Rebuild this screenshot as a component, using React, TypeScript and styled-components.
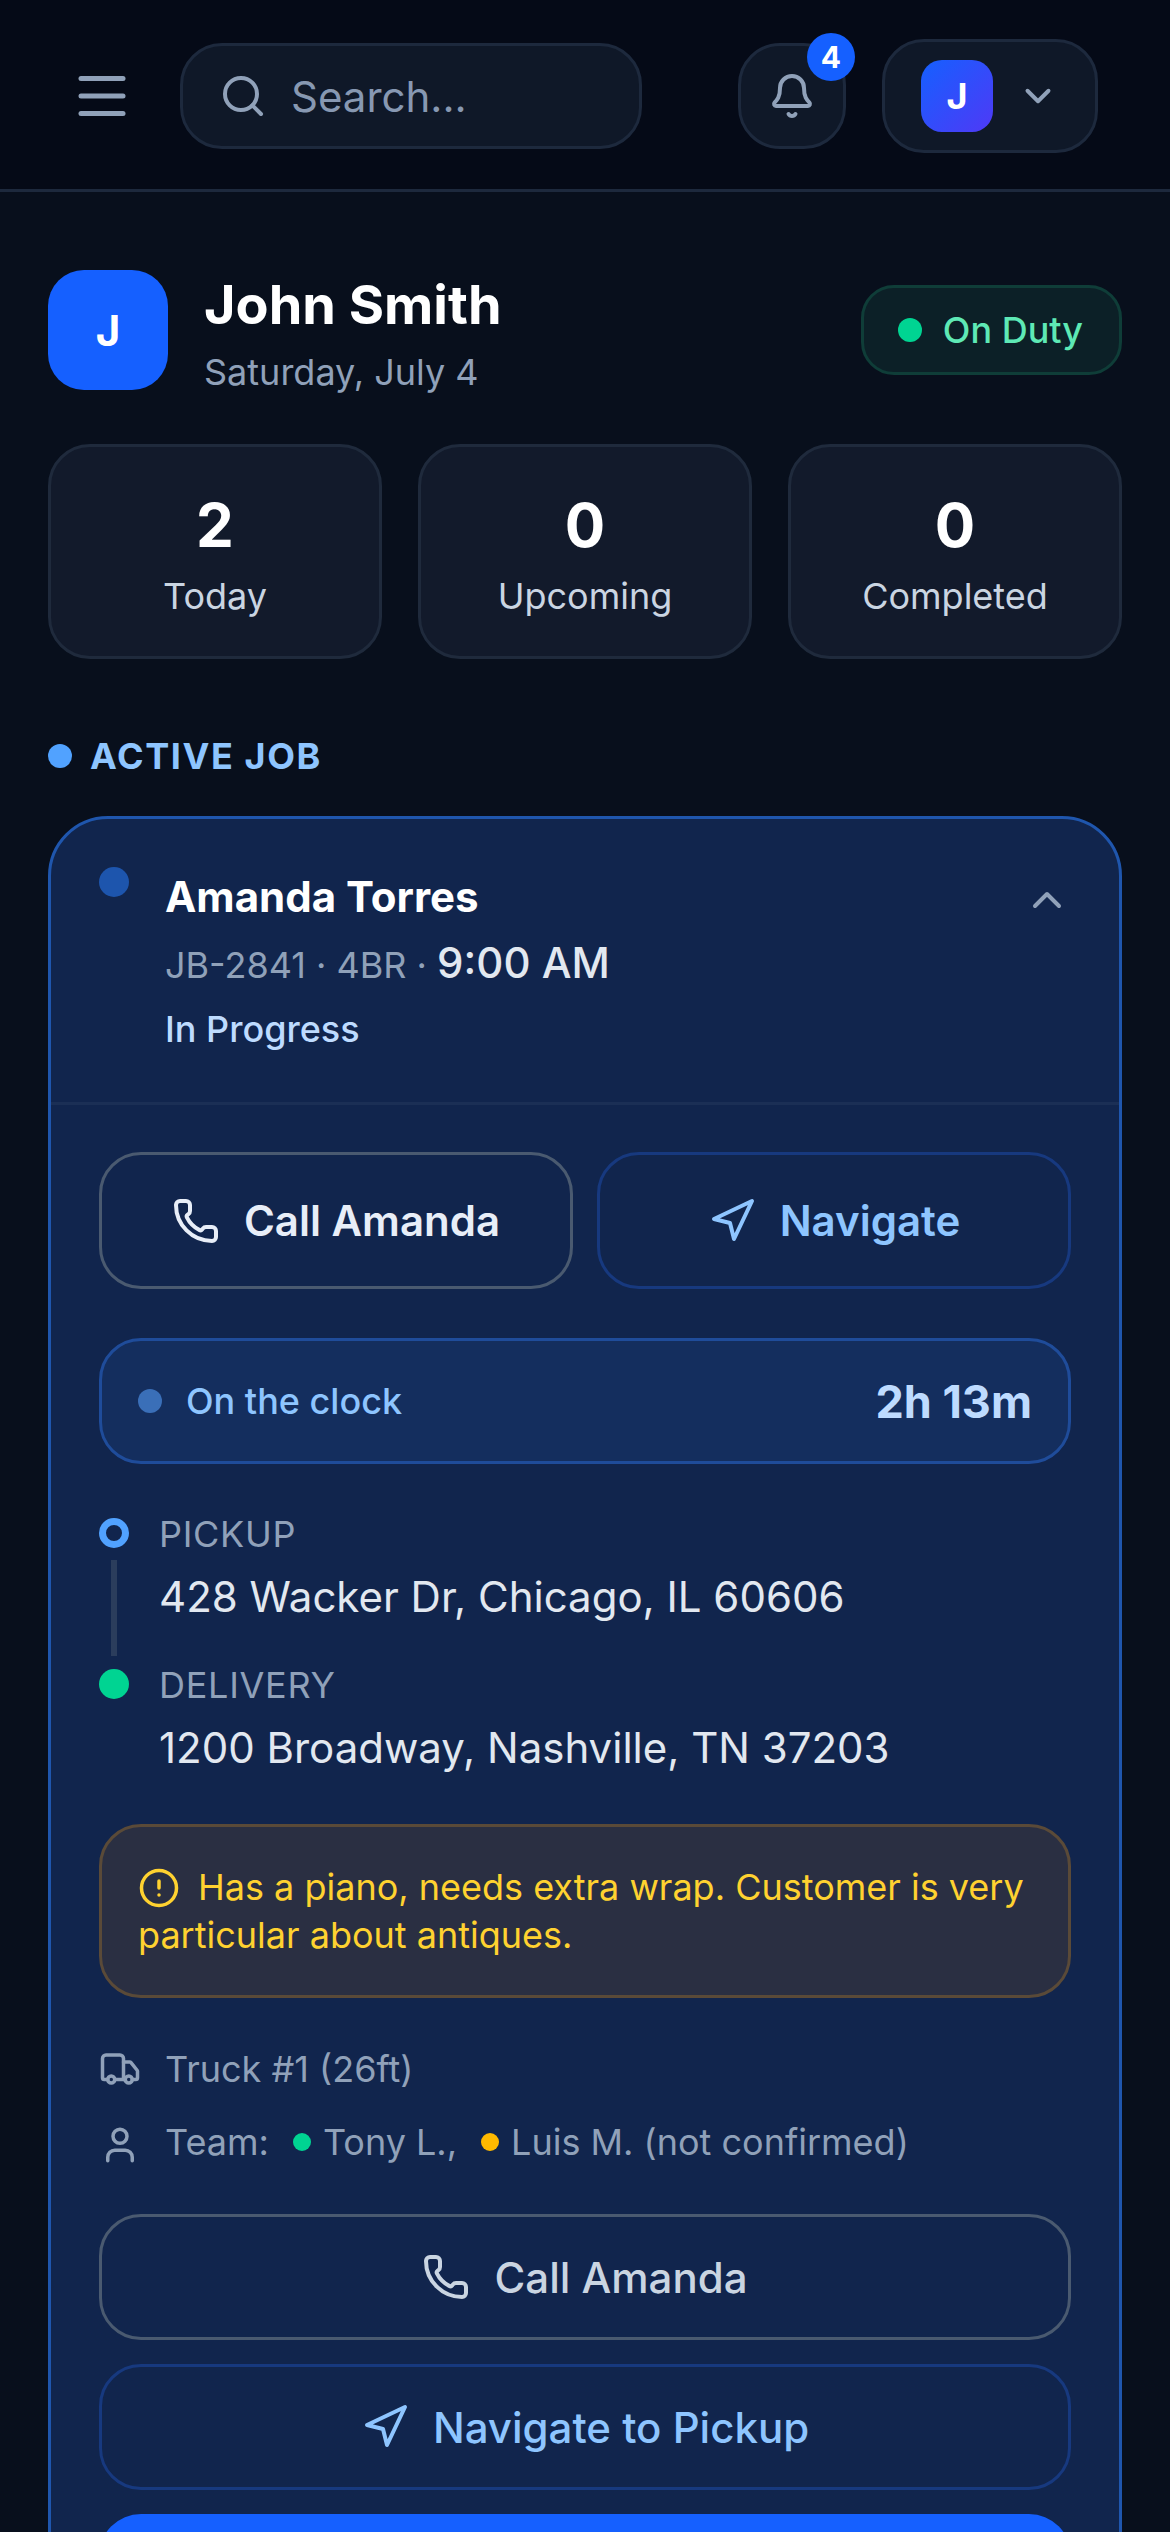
import styled, { createGlobalStyle } from "styled-components";
import {
  Bell,
  ChevronDown,
  ChevronUp,
  CircleAlert,
  Navigation,
  Phone,
  Search,
  Truck,
  User,
} from "lucide-react";

const GlobalStyle = createGlobalStyle`
  html, body {
    margin: 0;
    padding: 0;
    background: #080f1c;
    overflow: hidden;
  }

  * {
    box-sizing: border-box;
  }
`;

const Page = styled.div`
  width: 1170px;
  height: 2532px;
  overflow: hidden;
  background: #080f1c;
  font-family: Inter, "Noto Sans", sans-serif;
  color: #e2e8f0;
`;

const Header = styled.header`
  display: flex;
  align-items: center;
  justify-content: space-between;
  height: 192px;
  padding: 3px 72px 0 48px;
  background: #050a17;
  border-bottom: 3px solid #1d293d;
`;

const HeaderLeft = styled.div`
  display: flex;
  align-items: center;
  gap: 24px;
`;

const HeaderRight = styled.div`
  display: flex;
  align-items: center;
  gap: 36px;
`;

const MenuButton = styled.div`
  display: flex;
  align-items: center;
  justify-content: center;
  width: 108px;
  height: 108px;
  color: #90a1b9;
`;

const SearchBox = styled.div`
  display: flex;
  align-items: center;
  gap: 24px;
  width: 462px;
  height: 106px;
  padding: 0 36px;
  background: #0f1828;
  border: 3px solid #1d293d;
  border-radius: 42px;
  color: #90a1b9;
`;

const SearchText = styled.span`
  font-size: 42px;
  color: #8798b2;
`;

const BellButton = styled.div`
  position: relative;
  display: flex;
  align-items: center;
  justify-content: center;
  width: 108px;
  height: 106px;
  background: #0f1828;
  border: 3px solid #1d293d;
  border-radius: 42px;
  color: #90a1b9;
`;

const Badge = styled.span`
  position: absolute;
  top: -13px;
  right: -12px;
  display: flex;
  align-items: center;
  justify-content: center;
  width: 48px;
  height: 48px;
  border-radius: 50%;
  background: #1560ff;
  color: #fff;
  font-size: 30px;
  font-weight: 700;
`;

const UserButton = styled.div`
  display: flex;
  align-items: center;
  gap: 24px;
  width: 216px;
  height: 114px;
  padding: 0 36px;
  background: #0f1828;
  border: 3px solid #1d293d;
  border-radius: 42px;
  color: #90a1b9;
`;

const UserAvatar = styled.div`
  display: flex;
  align-items: center;
  justify-content: center;
  flex: none;
  width: 72px;
  height: 72px;
  border-radius: 21px;
  background: linear-gradient(135deg, #1560ff, #4f39f6);
  color: #fff;
  font-size: 36px;
  font-weight: 700;
`;

const Main = styled.main`
  display: flex;
  flex-direction: column;
  padding: 78px 48px 0;
`;

const Profile = styled.section`
  display: flex;
  align-items: flex-start;
  justify-content: space-between;
`;

const ProfileLeft = styled.div`
  display: flex;
  align-items: flex-start;
  gap: 36px;
`;

const BigAvatar = styled.div`
  display: flex;
  align-items: center;
  justify-content: center;
  width: 120px;
  height: 120px;
  border-radius: 36px;
  background: #1560ff;
  color: #fff;
  font-size: 42px;
  font-weight: 700;
`;

const ProfileText = styled.div`
  padding-top: 2px;
`;

const ProfileName = styled.h1`
  margin: 0 0 10px;
  font-size: 54px;
  font-weight: 700;
  line-height: 66px;
  color: #fff;
`;

const ProfileDate = styled.div`
  font-size: 36px;
  line-height: 48px;
  color: #90a1b9;
`;

const DutyPill = styled.div`
  display: flex;
  align-items: center;
  gap: 21px;
  height: 90px;
  margin-top: 15px;
  padding: 0 36px 0 34px;
  background: #0c2027;
  border: 3px solid #0f3d38;
  border-radius: 33px;
  color: #5ee9b5;
  font-size: 36px;
  font-weight: 500;
`;

const Dot = styled.span<{ $size: number; $color: string }>`
  flex: none;
  display: inline-block;
  width: ${(p) => p.$size}px;
  height: ${(p) => p.$size}px;
  border-radius: 50%;
  background: ${(p) => p.$color};
`;

const Stats = styled.section`
  display: grid;
  grid-template-columns: repeat(3, 1fr);
  gap: 36px;
  margin-top: 48px;
`;

const StatCard = styled.div`
  display: flex;
  flex-direction: column;
  align-items: center;
  height: 215px;
  padding-top: 42px;
  background: #121a2b;
  border: 3px solid #1f2a3c;
  border-radius: 42px;
`;

const StatValue = styled.div`
  font-size: 60px;
  font-weight: 700;
  line-height: 72px;
  color: #fff;
`;

const StatLabel = styled.div`
  margin-top: 11px;
  font-size: 36px;
  line-height: 48px;
  color: #cad5e2;
`;

const SectionLabel = styled.div`
  display: flex;
  align-items: center;
  gap: 18px;
  margin-top: 73px;
  font-size: 36px;
  font-weight: 700;
  line-height: 48px;
  letter-spacing: 1.6px;
  color: #8ec5ff;
`;

const JobCard = styled.section`
  margin-top: 36px;
  background: #11254d;
  border: 3px solid #1f56ad;
  border-radius: 60px;
`;

const JobHead = styled.div`
  display: flex;
  align-items: flex-start;
  gap: 36px;
  height: 286px;
  padding: 48px 48px 0;
  border-bottom: 3px solid #1b2f55;
`;

const JobHeadText = styled.div`
  flex: 1;
  padding-top: 3px;
`;

const JobName = styled.div`
  font-size: 42px;
  font-weight: 700;
  line-height: 54px;
  color: #fff;
`;

const JobMeta = styled.div`
  margin-top: 12px;
  font-size: 36px;
  line-height: 54px;
  color: #90a1b9;
`;

const JobTime = styled.span`
  font-size: 42px;
  font-weight: 500;
  color: #e2e8f0;
`;

const JobStatus = styled.div`
  margin-top: 13px;
  font-size: 36px;
  font-weight: 500;
  line-height: 48px;
  color: #bedbff;
`;

const Collapse = styled.div`
  margin-top: 9px;
  color: #90a1b9;
`;

const JobBody = styled.div`
  display: flex;
  flex-direction: column;
  padding: 47px 48px 0;
`;

const QuickRow = styled.div`
  display: grid;
  grid-template-columns: 1fr 1fr;
  gap: 24px;
`;

const ActionButton = styled.div<{ $tone: "plain" | "blue"; $tall?: boolean; $strong?: boolean }>`
  display: flex;
  align-items: center;
  justify-content: center;
  gap: 24px;
  height: ${(p) => (p.$tall ? 137 : 126)}px;
  border: 3px solid ${(p) => (p.$tone === "plain" ? "#4a5a70" : "#17397f")};
  border-radius: 42px;
  color: ${(p) => (p.$tone === "blue" ? "#8ec5ff" : p.$strong ? "#e8eef8" : "#cad5e2")};
  font-size: 42px;
  font-weight: ${(p) => (p.$strong ? 600 : 500)};
`;

const ClockBar = styled.div`
  display: flex;
  align-items: center;
  justify-content: space-between;
  height: 126px;
  margin-top: 49px;
  padding: 0 36px;
  background: #142e5e;
  border: 3px solid #1f4c9a;
  border-radius: 42px;
`;

const ClockLabel = styled.div`
  display: flex;
  align-items: center;
  gap: 24px;
  font-size: 36px;
  font-weight: 500;
  color: #8ec5ff;
`;

const ClockValue = styled.div`
  font-size: 45px;
  font-weight: 700;
  color: #bedbff;
`;

const Route = styled.div`
  display: flex;
  flex-direction: column;
  gap: 8px;
  margin-top: 49px;
`;

const Stop = styled.div`
  display: grid;
  grid-template-columns: 30px 1fr;
  column-gap: 30px;
`;

const Marker = styled.div`
  display: flex;
  flex-direction: column;
  align-items: center;
  padding-top: 5px;
`;

const StopDot = styled.span<{ $ring?: boolean }>`
  flex: none;
  width: 30px;
  height: 30px;
  border-radius: 50%;
  background: ${(p) => (p.$ring ? "transparent" : "#00d492")};
  border: ${(p) => (p.$ring ? "7px solid #51a2ff" : "none")};
`;

const StopLine = styled.span`
  width: 6px;
  height: 96px;
  margin-top: 12px;
  background: #2b3d5c;
`;

const StopLabel = styled.div`
  font-size: 36px;
  line-height: 42px;
  letter-spacing: 0.72px;
  color: #90a1b9;
`;

const StopAddress = styled.div`
  margin-top: 12px;
  font-size: 42px;
  line-height: 59px;
  color: #e2e8f0;
`;

const Warning = styled.div`
  margin-top: 47px;
  padding: 36px;
  background: #2a2f42;
  border: 3px solid #5a4a38;
  border-radius: 42px;
  font-size: 36px;
  line-height: 48px;
  color: #ffd230;

  svg {
    display: inline-block;
    margin-right: 18px;
    vertical-align: -9px;
  }
`;

const InfoRows = styled.div`
  display: flex;
  flex-direction: column;
  gap: 25px;
  margin-top: 47px;
`;

const InfoRow = styled.div`
  display: flex;
  align-items: center;
  gap: 24px;
  height: 48px;
  font-size: 36px;
  color: #90a1b9;
`;

const InfoIcon = styled.span<{ $drop?: boolean }>`
  display: flex;
  align-items: center;
  justify-content: center;
  flex: none;
  width: 42px;
  padding-top: ${(p) => (p.$drop ? 6 : 0)}px;
`;

const TeamMember = styled.span`
  display: inline-flex;
  align-items: center;
  gap: 12px;
`;

const WideActions = styled.div`
  display: flex;
  flex-direction: column;
  gap: 24px;
  margin-top: 48px;
`;

const PrimaryButton = styled.div`
  height: 126px;
  border-radius: 42px;
  background: #1560ff;
`;

function MenuIcon() {
  return (
    <svg width="48" height="42" viewBox="0 0 48 42" fill="none" stroke="currentColor" strokeWidth="5" strokeLinecap="round">
      <line x1="3" y1="3.5" x2="45" y2="3.5" />
      <line x1="3" y1="21" x2="45" y2="21" />
      <line x1="3" y1="38.5" x2="45" y2="38.5" />
    </svg>
  );
}

function App() {
  return (
    <Page>
      <GlobalStyle />
      <Header>
        <HeaderLeft>
          <MenuButton>
            <MenuIcon />
          </MenuButton>
          <SearchBox>
            <Search size={48} strokeWidth={2} />
            <SearchText>Search...</SearchText>
          </SearchBox>
        </HeaderLeft>
        <HeaderRight>
          <BellButton>
            <Bell size={48} strokeWidth={2} />
            <Badge>4</Badge>
          </BellButton>
          <UserButton>
            <UserAvatar>J</UserAvatar>
            <ChevronDown size={42} strokeWidth={2.25} />
          </UserButton>
        </HeaderRight>
      </Header>
      <Main>
        <Profile>
          <ProfileLeft>
            <BigAvatar>J</BigAvatar>
            <ProfileText>
              <ProfileName>John Smith</ProfileName>
              <ProfileDate>Saturday, July 4</ProfileDate>
            </ProfileText>
          </ProfileLeft>
          <DutyPill>
            <Dot $size={24} $color="#00d492" />
            On Duty
          </DutyPill>
        </Profile>
        <Stats>
          <StatCard>
            <StatValue>2</StatValue>
            <StatLabel>Today</StatLabel>
          </StatCard>
          <StatCard>
            <StatValue>0</StatValue>
            <StatLabel>Upcoming</StatLabel>
          </StatCard>
          <StatCard>
            <StatValue>0</StatValue>
            <StatLabel>Completed</StatLabel>
          </StatCard>
        </Stats>
        <SectionLabel>
          <Dot $size={24} $color="#51a2ff" />
          ACTIVE JOB
        </SectionLabel>
        <JobCard>
          <JobHead>
            <Dot $size={30} $color="#1d55ad" />
            <JobHeadText>
              <JobName>Amanda Torres</JobName>
              <JobMeta>
                JB-2841 · 4BR · <JobTime>9:00 AM</JobTime>
              </JobMeta>
              <JobStatus>In Progress</JobStatus>
            </JobHeadText>
            <Collapse>
              <ChevronUp size={48} strokeWidth={2} />
            </Collapse>
          </JobHead>
          <JobBody>
            <QuickRow>
              <ActionButton $tone="plain" $tall $strong>
                <Phone size={48} strokeWidth={2} />
                Call Amanda
              </ActionButton>
              <ActionButton $tone="blue" $tall $strong>
                <Navigation size={48} strokeWidth={2} />
                Navigate
              </ActionButton>
            </QuickRow>
            <ClockBar>
              <ClockLabel>
                <Dot $size={24} $color="#3a6fb8" />
                On the clock
              </ClockLabel>
              <ClockValue>2h 13m</ClockValue>
            </ClockBar>
            <Route>
              <Stop>
                <Marker>
                  <StopDot $ring />
                  <StopLine />
                </Marker>
                <div>
                  <StopLabel>PICKUP</StopLabel>
                  <StopAddress>428 Wacker Dr, Chicago, IL 60606</StopAddress>
                </div>
              </Stop>
              <Stop>
                <Marker>
                  <StopDot />
                </Marker>
                <div>
                  <StopLabel>DELIVERY</StopLabel>
                  <StopAddress>1200 Broadway, Nashville, TN 37203</StopAddress>
                </div>
              </Stop>
            </Route>
            <Warning>
              <CircleAlert size={42} strokeWidth={2} />
              Has a piano, needs extra wrap. Customer is very particular about antiques.
            </Warning>
            <InfoRows>
              <InfoRow>
                <InfoIcon>
                  <Truck size={42} strokeWidth={2} />
                </InfoIcon>
                Truck #1 (26ft)
              </InfoRow>
              <InfoRow>
                <InfoIcon $drop>
                  <User size={42} strokeWidth={2} />
                </InfoIcon>
                Team:
                <TeamMember>
                  <Dot $size={18} $color="#00d492" />
                  Tony L.,
                </TeamMember>
                <TeamMember>
                  <Dot $size={18} $color="#ffb900" />
                  Luis M. (not confirmed)
                </TeamMember>
              </InfoRow>
            </InfoRows>
            <WideActions>
              <ActionButton $tone="plain">
                <Phone size={48} strokeWidth={2} />
                Call Amanda
              </ActionButton>
              <ActionButton $tone="blue">
                <Navigation size={48} strokeWidth={2} />
                Navigate to Pickup
              </ActionButton>
              <PrimaryButton />
            </WideActions>
          </JobBody>
        </JobCard>
      </Main>
    </Page>
  );
}

export default App;
